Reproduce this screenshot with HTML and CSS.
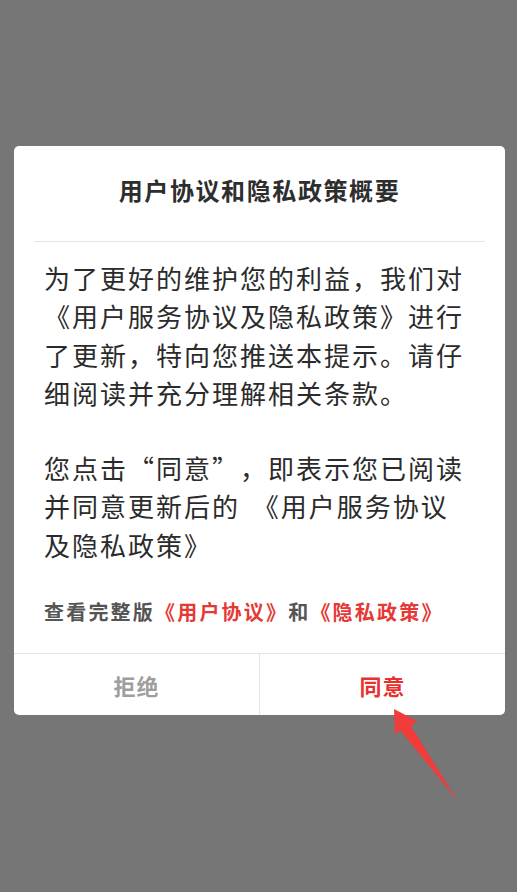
FILE: index.html
```html
<!DOCTYPE html>
<html lang="zh-CN">
<head>
<meta charset="utf-8">
<title>用户协议和隐私政策概要</title>
<link rel="stylesheet" href="styles.css">
</head>
<body>
<div class="screen">
  <div class="dialog">
    <div class="dialog-header">
      <h1 class="dialog-title">用户协议和隐私政策概要</h1>
    </div>
    <div class="dialog-divider"></div>
    <div class="dialog-body">
      <p class="para">为了更好的维护您的利益，我们对<br>《用户服务协议及隐私政策》进行<br>了更新，特向您推送本提示。请仔<br>细阅读并充分理解相关条款。</p>
      <p class="para para-second">您点击“同意”，即表示您已阅读<br>并同意更新后的<span class="gap"> </span>《用户服务协议<br>及隐私政策》</p>
      <p class="links">查看完整版<span class="link">《用户协议》</span>和<span class="link">《隐私政策》</span></p>
    </div>
    <div class="dialog-actions">
      <div class="btn btn-reject">拒绝</div>
      <div class="btn btn-agree">同意</div>
    </div>
  </div>
  <svg class="arrow" width="517" height="892" viewBox="0 0 517 892" xmlns="http://www.w3.org/2000/svg">
    <path d="M394 709 L417 721 L411 726 L457 800 L400 730 L395 735 Z" fill="#f23b3b"/>
  </svg>
</div>
</body>
</html>
```
FILE: styles.css
```css
html, body {
  margin: 0;
  padding: 0;
}
body {
  background: #767676;
  font-family: "Noto Sans CJK SC", "Noto Sans", sans-serif;
  text-spacing-trim: space-all;
}
.screen {
  position: relative;
  width: 517px;
  height: 892px;
  padding-top: 146px;
  box-sizing: border-box;
}
.dialog {
  margin-left: 14px;
  width: 491px;
  background: #ffffff;
  border-radius: 5px;
  overflow: hidden;
}
.dialog-header {
  padding: 29px 0 36px;
  text-align: center;
}
.dialog-title {
  margin: 0;
  font-size: 24px;
  line-height: 30px;
  font-weight: 700;
  letter-spacing: 1.6px;
  color: #2e2e2e;
}
.dialog-divider {
  height: 1px;
  margin: 0 20px;
  background: #e6e6e6;
}
.dialog-body {
  padding: 17px 20px 27px 30px;
}
.para {
  margin: 0;
  font-size: 26px;
  line-height: 38.3px;
  letter-spacing: 2px;
  color: #2b2b2b;
  white-space: nowrap;
}
.gap {
  letter-spacing: 7px;
}
.para-second {
  margin-top: 37px;
}
.links {
  margin: 34px 0 0;
  font-size: 20px;
  line-height: 28px;
  font-weight: 700;
  letter-spacing: 2.2px;
  color: #555555;
  white-space: nowrap;
}
.link {
  color: #e53935;
}
.dialog-actions {
  display: flex;
  border-top: 1px solid #e2e2e2;
  height: 61px;
}
.btn {
  flex: 1;
  display: flex;
  align-items: center;
  justify-content: center;
  font-size: 22px;
  font-weight: 700;
  letter-spacing: 1px;
}
.btn-reject {
  color: #9e9e9e;
  border-right: 1px solid #e2e2e2;
}
.btn-agree {
  color: #e8302c;
}
.arrow {
  position: absolute;
  top: 0;
  left: 0;
  pointer-events: none;
}
```
